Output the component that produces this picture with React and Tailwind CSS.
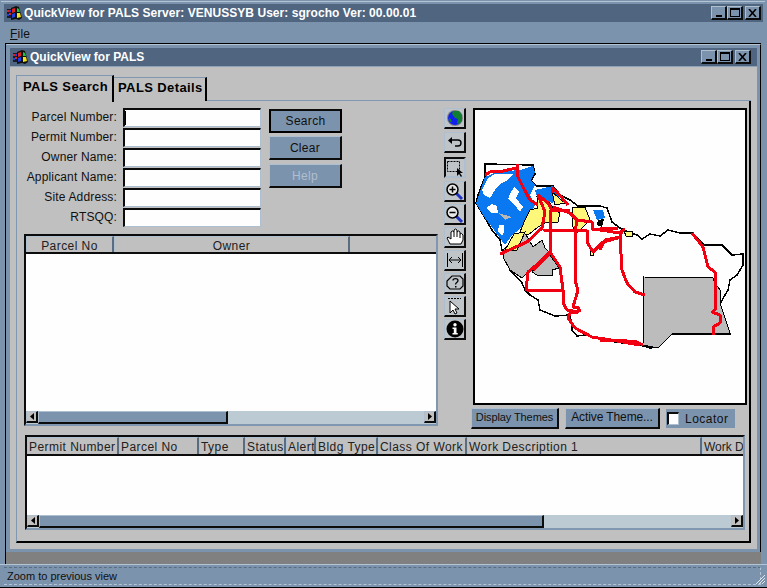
import React from 'react';

const FONT = "font-['Liberation_Sans',Arial,sans-serif]";
const BEVEL = 'border-t border-l border-t-[#aebfd0] border-l-[#aebfd0] border-r-2 border-b-2 border-r-[#0c0c0c] border-b-[#0c0c0c]';
const SUNKEN = 'border-t-2 border-l-2 border-t-[#0c0c0c] border-l-[#0c0c0c] border-r border-b border-r-[#aebfd0] border-b-[#aebfd0]';

const LogoIcon = () => (
  <svg width="17" height="16" viewBox="0 0 17 16" className="shrink-0">
    <path d="M1 4h5v9H1z" fill="#1a1a2a" />
    <path d="M1 5h2v2H1zM3 8h2v2H3z" fill="#e02020" />
    <path d="M1 9h2v2H1zM3 5h2v2H3z" fill="#2040e0" />
    <path d="M5 3l5-2v13l-5 1z" fill="#101010" />
    <path d="M6 4l3-1v4l-3 1z" fill="#e02020" />
    <path d="M6 9l3-1v4l-3 1z" fill="#2040e0" />
    <path d="M10 1l3 1 3 11-3 2-3-1z" fill="#101010" />
    <path d="M11 3l2 1 1 3-3 0z" fill="#20c040" />
    <path d="M11 8l3 0 1 4-4 1z" fill="#f0e020" />
  </svg>
);

const WindowButtons = () => (
  <div className="flex items-center">
    <button className={`w-[16px] h-[14px] bg-[#7c93ad] ${BEVEL} flex items-end justify-center pb-[1px]`}>
      <span className="block w-[6px] h-[2px] bg-black" />
    </button>
    <button className={`w-[16px] h-[14px] bg-[#7c93ad] ${BEVEL} flex items-center justify-center`}>
      <span className="block w-[10px] h-[9px] border border-black border-t-2" />
    </button>
    <button className={`ml-[2px] w-[16px] h-[14px] bg-[#7c93ad] ${BEVEL} flex items-center justify-center`}>
      <svg width="9" height="8" viewBox="0 0 9 8">
        <path d="M1 0l7 8M8 0L1 8" stroke="#000" strokeWidth="1.6" />
      </svg>
    </button>
  </div>
);

const ArrowBtn = ({ dir }) => (
  <div className={`w-[12px] h-[12px] shrink-0 bg-[#c0c0c0] ${BEVEL} flex items-center justify-center`}>
    <svg width="4" height="7" viewBox="0 0 4 7">
      <path d={dir === 'left' ? 'M4 0v7L0 3.5z' : 'M0 0v7l4-3.5z'} fill="#000" />
    </svg>
  </div>
);

const ScrollBar = ({ thumb }) => (
  <div className="h-[13px] shrink-0 flex bg-[#bccad3]">
    <ArrowBtn dir="left" />
    <div className="flex-1 min-w-0">
      <div className={`h-full bg-[#7c93ad] ${BEVEL}`} style={{ width: thumb }} />
    </div>
    <ArrowBtn dir="right" />
  </div>
);

const formFields = ['Parcel Number:', 'Permit Number:', 'Owner Name:', 'Applicant Name:', 'Site Address:', 'RTSQQ:'];

const ToolBtn = ({ pressed, children, className }) => (
  <div
    className={`w-[22px] h-[21px] shrink-0 bg-[#bfc4c8] flex items-center justify-center ${className} ${
      pressed
        ? 'border-2 border-t-[#0c0c0c] border-l-[#0c0c0c] border-r-[#aebfd0] border-b-[#aebfd0]'
        : 'border-t border-l border-[#aebfd0] border-r-2 border-b-2 border-r-[#0c0c0c] border-b-[#0c0c0c]'
    }`}
  >
    {children}
  </div>
);

const Magnifier = ({ plus }) => (
  <svg width="19" height="19" viewBox="0 0 19 19">
    <path d="M11 11l6 6" stroke="#2030c0" strokeWidth="3" />
    <circle cx="7.5" cy="7.5" r="5.5" fill="#e8e8e8" stroke="#000" strokeWidth="1.5" />
    <path d={plus ? 'M4.5 7.5h6M7.5 4.5v6' : 'M4.5 7.5h6'} stroke="#000" strokeWidth="1.5" />
  </svg>
);

const tools = [
  <svg key="g" width="18" height="18" viewBox="0 0 18 18">
    <circle cx="9" cy="9" r="8" fill="#808080" />
    <circle cx="9" cy="9" r="7" fill="#1020f0" />
    <path d="M7 2l6 0 3 4 0 6-3 3-2-1 1-4-3-1-3-4zM3 9l2 1 1 3-2 0z" fill="#108030" />
  </svg>,
  <svg key="u" width="14" height="10" viewBox="0 0 14 10">
    <path d="M4 3h6a3 3 0 0 1 0 6H7" fill="none" stroke="#000" strokeWidth="1.4" />
    <path d="M4 0v7L0 3.500z" fill="#000" />
  </svg>,
  <svg key="s" width="18" height="18" viewBox="0 0 18 18">
    <rect x="1.5" y="2.5" width="12" height="10" fill="none" stroke="#000" strokeDasharray="2 1" />
    <path d="M11 9v8l2-2 2 3 1-1-2-3h3z" fill="#000" />
  </svg>,
  <Magnifier key="zi" plus />,
  <Magnifier key="zo" />,
  <svg key="h" width="18" height="18" viewBox="0 0 18 18">
    <path
      d="M4 16L1 10l1-1 3 2V4l1.500-1L8 4V2l1.500-1L11 2v2l1.500-1L14 4v2l1.500-.5L17 7v5l-2 4z"
      fill="#fff"
      stroke="#000"
      strokeWidth="1"
    />
    <path d="M8 4v5M11 4v5M14 6v4" stroke="#000" strokeWidth="1" />
  </svg>,
  <svg key="w" width="18" height="16" viewBox="0 0 18 16">
    <path d="M1.500 1v14M16.500 1v14" stroke="#000" strokeWidth="1" />
    <path d="M4 8h10" stroke="#000" strokeWidth="1" />
    <path d="M6 5L3 8l3 3M12 5l3 3-3 3" fill="none" stroke="#000" strokeWidth="1" />
  </svg>,
  <svg key="q" width="18" height="16" viewBox="0 0 18 16">
    <path d="M6 1h8l3 3v7l-3 3H4l-3-3V6z" fill="none" stroke="#000" strokeWidth="1.200" />
    <path d="M7 5.500C7 3 12 3 12 5.500 12 7.500 9.500 7.500 9.500 9.500" fill="none" stroke="#000" strokeWidth="1.300" />
    <path d="M9 11h1.500v1.500H9z" fill="#000" />
  </svg>,
  <svg key="c" width="18" height="18" viewBox="0 0 18 18">
    <path d="M2 1.500h13" stroke="#000" strokeDasharray="2 1" />
    <path d="M4 4v12l3-3 2 4 2-1-2-4h4z" fill="#fff" stroke="#000" />
  </svg>,
  <svg key="i" width="18" height="18" viewBox="0 0 18 18">
    <circle cx="9" cy="9" r="8.500" fill="#000" />
    <circle cx="9" cy="4.800" r="1.700" fill="#fff" />
    <path d="M6.500 7.500h4v5.500h1.200v1.500H6.500V13h1.300V9H6.500z" fill="#fff" />
  </svg>,
];

// gaps under each tool button
const toolGaps = ['mb-[3px]', 'mb-[4px]', 'mb-[3px]', 'mb-[2px]', 'mb-[2px]', 'mb-[2px]', 'mb-[2px]', 'mb-[2px]', 'mb-[2px]', 'mb-0'];

const OUTLINE =
  'M485 164L533 165L535 174L531 181L537 186L553 186L560 195L570 200L578 206L600 206L607 208L612 222L620 228L630 233L637 235L642 239L650 234L660 236L668 230L680 233L692 233L705 245L722 245L732 255L743 254L743 265L737 275L730 280L728 290L721 302L718 310L725 325L730 334L672 334L665 340L658 347L650 348L640 345L615 342L598 338L585 335L577 336L572 330L572 325L570 315L555 316L540 310L538 300L530 295L525 290L522 283L510 270L505 258L502 250L500 240L492 230L485 218L476 203L478 195L485 177L485 164Z';

const YELLOW = [
  'M537 197L550 203L553 208L560 213L558 222L545 223L538 227L528 235L520 232L525 220L530 210L538 208Z',
  'M572 207L585 207L590 220L585 225L577 233L573 227L572 217Z',
  'M514 234L505 250L517 250L525 232Z',
  'M552 192L565 203L555 205Z',
  'M590 250L593 250L593 255L590 255Z',
  'M624 231L632 231L632 236L626 236Z',
];

const GRAY = [
  'M503 250L515 240L525 233L533 247L542 240L545 248L550 253L533 270L528 272L522 278L510 270L503 257Z',
  'M550 255L559 268L552 270L552 275L537 275L532 272Z',
  'M644 277L713 278L715 283L720 290L720 303L730 333L672 334L658 348L643 345Z',
];

const WHITE_HOLES = [
  'M488 178L495 174L513 174L508 180L500 184L495 190L490 198L484 195L482 190Z',
  'M514 187L510 194L508 199L514 204L520 212L523 207L516 198L519 192Z',
  'M486 208L492 213L498 213L497 206L492 204Z',
  'M499 225L504 225L504 232L502 236L498 231Z',
];

const ROADS = [
  'M485 175L490 172L503 171L517 168',
  'M517 164L518 177L523 187L530 200L538 205',
  'M500 254L527 242L542 228L545 212L538 195L548 203L552 210L570 210',
  'M552 193L552 188L557 192L568 205',
  'M543 230L587 231',
  'M550 210L550 253L533 270',
  'M550 252L540 262L528 272L526 290L562 291',
  'M550 252L560 267L563 290L563 303L567 310L578 312L570 313L568 318L575 328L592 337L617 341L640 345',
  'M575 250L575 280L578 290L573 307L578 307L580 312',
  'M577 220L575 233L575 270',
  'M553 207L570 213L577 220L592 222L593 230L607 228L618 228',
  'M587 230L587 242L593 252L603 242L618 238',
  'M600 230L620 233L625 229',
  'M600 250L605 240L620 237L622 230',
  'M620 237L622 270L627 283L635 292L645 295',
  'M692 233L703 247L708 267L715 272L715 310L712 312L720 315L720 323L713 327L713 335',
  'M600 340L617 340L637 342L643 345',
];

const CountyMap = () => (
  <svg width="270" height="293" viewBox="475 110 270 293" className="block" shapeRendering="crispEdges">
    <path d={OUTLINE} fill="#fefefe" stroke="#000" strokeWidth="1.500" />
    <path
      d="M485 177L476 203L485 218L505 245L512 235L525 225L535 205L530 195L535 185L531 180L535 172L533 166L520 170L497 172Z"
      fill="#0a78f0"
    />
    <path d="M535 190L553 186L560 197L552 203L537 197Z" fill="#0a78f0" />
    {WHITE_HOLES.map((d, i) => (
      <path key={i} d={d} fill="#fefefe" />
    ))}
    <path d="M498 213L512 217L505 220Z" fill="#b8b8b8" />
    {GRAY.map((d, i) => (
      <path key={i} d={d} fill="#bcbcbc" stroke="#000" strokeWidth="1" />
    ))}
    {YELLOW.map((d, i) => (
      <path key={i} d={d} fill="#fdf87a" stroke="#000" strokeWidth="1" />
    ))}
    <path d="M593 210L603 210L605 218L597 220Z" fill="#0a78f0" />
    <path d="M598 220L604 219L602 227L597 225Z" fill="#000" />
    {ROADS.map((d, i) => (
      <path key={i} d={d} fill="none" stroke="#f00010" strokeWidth="3" strokeLinejoin="round" />
    ))}
  </svg>
);

const HeaderCell = ({ width, center, last, children }) => (
  <div
    className={`h-full shrink-0 bg-[#c0c0c0] border-l border-t border-[#aebfd0] pl-[1px] leading-[19px] whitespace-nowrap ${
      last ? 'tracking-normal' : 'overflow-hidden pr-[1px] border-r-2 border-r-[#5a6c80] tracking-[0.45px]'
    } ${center ? 'text-center' : ''}`}
    style={{ width }}
  >
    {children}
  </div>
);

const permitCols = [
  ['Permit Number', 92],
  ['Parcel No', 80],
  ['Type', 46],
  ['Status', 41],
  ['Alert', 30],
  ['Bldg Type', 62],
  ['Class Of Work', 89],
  ['Work Description 1', 235],
  ['Work D', 42],
];

export default function App() {
  return (
    <div className={`w-[767px] h-[588px] overflow-hidden bg-[#7c93ad] flex flex-col text-[12px] text-[#101010] ${FONT}`}>
      <div className="h-px mt-px ml-px mr-[2px] bg-[#b4c4d4] shrink-0" />

      {/* App title bar */}
      <div className="mt-[2px] mx-[4px] h-[18px] shrink-0 bg-[#4f6580] flex items-center pl-[2px] pr-[2px] justify-between">
        <div className="flex items-center text-white font-bold tracking-[0.05px] whitespace-nowrap">
          <LogoIcon />
          <span className="ml-[1px]">QuickView for PALS Server: VENUSSYB User: sgrocho Ver: 00.00.01</span>
        </div>
        <WindowButtons />
      </div>

      {/* Menu */}
      <div className="h-[21px] shrink-0 pl-[10px] pt-[3px] tracking-[0.2px]">
        <span className="underline">F</span>ile
      </div>

      {/* MDI area */}
      <div className="h-[521px] shrink-0 ml-[5px] mr-[6px] bg-[#808080] border-t border-l border-black">
        <div className="w-[755px] h-[508px] bg-[#7c93ad] border-t border-l border-t-[#b4c4d4] border-l-[#7c93ad] border-r border-r-black pt-[3px] pl-[3px] pr-[3px] pb-[3px] flex flex-col">
          {/* Child title bar */}
          <div className="h-[18px] shrink-0 bg-[#4f6580] flex items-center justify-between pl-[2px] pr-[6px]">
            <div className="flex items-center text-white font-bold whitespace-nowrap">
              <LogoIcon />
              <span className="ml-[1px]">QuickView for PALS</span>
            </div>
            <WindowButtons />
          </div>

          {/* Child content */}
          <div className="flex-1 min-h-0 bg-[#c0c0c0] border-t border-[#8fa3b8] pl-[6px] pr-[6px] flex flex-col">
            {/* Tabs */}
            <div className="h-[34px] shrink-0 flex items-end pt-[7px]">
              <div className="w-[98px] h-[27px] border-t border-l border-[#7f97b0] border-r-2 border-r-black bg-[#c0c0c0] font-bold text-[13px] tracking-[0.4px] pl-[6px] leading-[22px] text-black whitespace-nowrap relative top-px">
                PALS Search
              </div>
              <div className="w-[93px] h-[24px] border-t border-[#7f97b0] border-r-2 border-r-black bg-[#c0c0c0] font-bold text-[13px] tracking-[0.4px] pl-[4px] leading-[20px] text-black whitespace-nowrap">
                PALS Details
              </div>
              <div className="flex-1 border-b border-[#7f97b0]" />
            </div>

            {/* Tab panel */}
            <div className="h-[442px] shrink-0 border-l border-l-[#7f97b0] border-r-2 border-r-black border-b-2 border-b-black pl-[7px] pr-[2px] pt-[7px] flex flex-col">
              <div className="flex h-[321px] shrink-0">
                {/* Search form + result list */}
                <div className="w-[414px] shrink-0 flex flex-col">
                  <div className="flex h-[126px] shrink-0">
                    <div className="w-[237px] shrink-0 flex flex-col">
                      {formFields.map((label, i) => (
                        <div key={label} className="h-[20px] flex items-start">
                          <label className="w-[93px] text-right leading-[19px] tracking-[0.15px] whitespace-nowrap">{label}</label>
                          <div className={`ml-[6px] w-[138px] h-[19px] bg-[#fefefe] ${SUNKEN} flex items-stretch py-[1px]`}>
                            {i === 0 && <span className="w-px bg-black" />}
                          </div>
                        </div>
                      ))}
                    </div>
                    <div className="ml-[8px] w-[73px] flex flex-col pt-[1px] tracking-[0.3px]">
                      <div className="h-[24px] bg-[#7c93ad] border-2 border-black border-t-[#0c0c0c] flex items-center justify-center">Search</div>
                      <div className={`mt-[3px] h-[24px] bg-[#7c93ad] ${BEVEL} flex items-center justify-center`}>Clear</div>
                      <div className={`mt-[4px] h-[24px] bg-[#7c93ad] ${BEVEL} flex items-center justify-center text-[#aebfd0]`}>Help</div>
                    </div>
                  </div>

                  <div className="h-[192px] shrink-0 border-2 border-[#0c0c0c] border-r-[#7f97b0] border-b-[#7f97b0] flex flex-col bg-[#fefefe]">
                    <div className="h-[18px] shrink-0 flex border-b-2 border-[#0c0c0c] bg-[#c0c0c0] text-[#202020]">
                      <HeaderCell width={88} center>Parcel No</HeaderCell>
                      <HeaderCell width={236} center>Owner</HeaderCell>
                    </div>
                    <div className="flex-1 min-h-0" />
                    <ScrollBar thumb={190} />
                  </div>
                </div>

                {/* Map tools */}
                <div className="ml-[6px] w-[22px] shrink-0 flex flex-col">
                  {tools.map((icon, i) => (
                    <ToolBtn key={i} pressed={i === 2} className={toolGaps[i]}>
                      {icon}
                    </ToolBtn>
                  ))}
                </div>

                {/* Map */}
                <div className="ml-[5px] flex-1 min-w-0 flex flex-col">
                  <div className="ml-[2px] w-[274px] h-[297px] shrink-0 border-2 border-black bg-[#fefefe]">
                    <CountyMap />
                  </div>
                  <div className="flex mt-[3px] items-start">
                    <div className={`w-[88px] h-[21px] bg-[#7c93ad] ${BEVEL} text-center leading-[17px] text-[11px] tracking-[-0.1px] whitespace-nowrap`}>Display Themes</div>
                    <div className={`ml-[6px] w-[95px] h-[21px] bg-[#7c93ad] ${BEVEL} text-center leading-[17px] tracking-[-0.1px] whitespace-nowrap`}>Active Theme...</div>
                    <div className="ml-[6px] w-[69px] h-[19px] mt-px bg-[#7c93ad] flex items-center tracking-[0.5px]">
                      <span className={`ml-px w-[12px] h-[13px] bg-[#fefefe] ${SUNKEN}`} />
                      <span className="ml-[6px]">Locator</span>
                    </div>
                  </div>
                </div>
              </div>

              {/* Permit table */}
              <div className="mt-[6px] ml-px w-[720px] h-[95px] shrink-0 border-2 border-[#0c0c0c] border-r-[#7f97b0] border-b-[#7f97b0] flex flex-col bg-[#fefefe] overflow-hidden">
                <div className="h-[19px] shrink-0 flex border-b-2 border-[#0c0c0c] bg-[#c0c0c0] text-[#202020]">
                  {permitCols.map(([name, w], i) => (
                    <HeaderCell key={name} width={w} last={i === permitCols.length - 1}>{name}</HeaderCell>
                  ))}
                </div>
                <div className="flex-1 min-h-0" />
                <ScrollBar thumb={505} />
              </div>
            </div>
          </div>
        </div>
      </div>

      {/* Status bar */}
      <div className="flex-1 min-h-0 border-t border-[#b4c4d4] border-b border-b-black pt-[1px] pl-[4px] flex flex-col relative">
        <div className="h-[18px] mt-[1px] mr-[6px] border-t border-dashed border-t-[#5a6c80] border-b border-b-[#b4c4d4] border-r border-r-[#b4c4d4] pl-[3px] leading-[17px] text-[11px]">
          Zoom to previous view
        </div>
        <svg width="12" height="12" viewBox="0 0 12 12" className="absolute right-[1px] bottom-[2px]">
          <path d="M11 2L2 11M11 5L5 11M11 8L8 11" stroke="#dfe6ec" strokeWidth="1" />
        </svg>
      </div>
    </div>
  );
}
